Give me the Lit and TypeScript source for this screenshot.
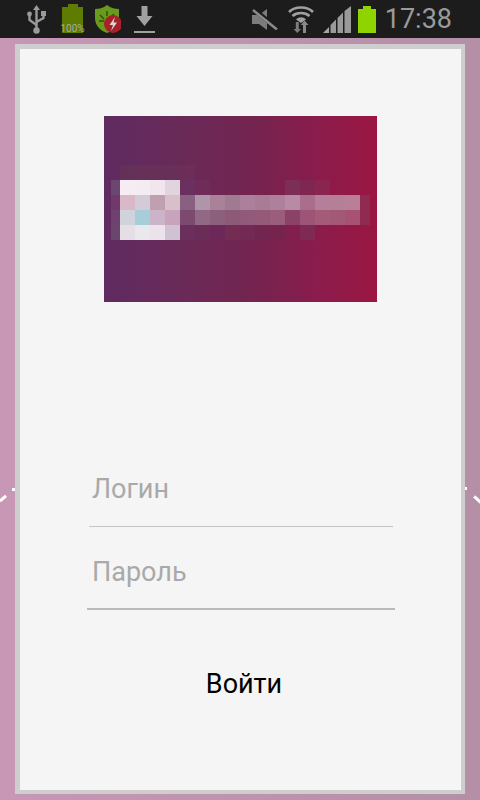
import { LitElement, html, css, svg } from "lit";
import { customElement } from "lit/decorators.js";

const T = "";
const ROWS: string[][] = [
  [T, "#633058", "#663059", "#663059", "#683059", "#6c2e58", T, T, T, T, T, T, T, T, T, T, T, T],
  ["#6b4670", "#f6ecf3", "#f1edf1", "#f2e6ee", "#e0d5df", "#6a3060", "#6f2c58", T, T, T, T, T, "#7d2e58", "#7f2653", "#8a2550", T, T, T],
  ["#6f3a6b", "#d9b8c8", "#d5cbd8", "#c0a0b0", "#d8c0c8", "#8a6080", "#b094aa", "#a98299", "#a07a90", "#ac7f9a", "#a87c95", "#ae809c", "#b88aa6", "#aa6d8c", "#b57f9c", "#b57f98", "#b97f98", "#912a50"],
  ["#70406e", "#d0d2dc", "#a6ced9", "#ccb4c8", "#c8a4bc", "#7c4a6e", "#926887", "#8c5f7c", "#8c5a76", "#925a7a", "#955a78", "#9b5d7c", "#8a4366", "#9c5577", "#a45b78", "#a35876", "#a85272", "#8f2a50"],
  ["#6a456c", "#e5dee6", "#e9e8ed", "#ece2ea", "#cfc2d2", "#6a2f5c", "#6c2c58", "#6c2858", "#742c54", "#722a54", "#70264f", "#762350", T, "#7e2a55", T, T, T, T],
];

const usb = svg`<svg class="i" width="19" height="29" viewBox="0 0 19 29"><g fill="none" stroke="#9a9a9a" stroke-width="2.4"><path d="M9.5 4V25"/><path d="M2.5 10V15L9.5 20"/><path d="M16.5 9V13L9.5 17"/></g><path d="M9.5 0L13 5H6Z" fill="#9a9a9a"/><circle cx="9.5" cy="25.5" r="3.2" fill="#9a9a9a"/><circle cx="2.5" cy="9" r="2.4" fill="#9a9a9a"/><rect x="14" y="6" width="5" height="5" fill="#9a9a9a"/></svg>`;
const shield = svg`<svg class="i" width="26" height="28" viewBox="0 0 26 28"><path d="M12 0C8 3 4 4 0 4V13C0 21 6 26 12 28C18 26 24 21 24 13V4C20 4 16 3 12 0Z" fill="#6a9a1c"/><path d="M12 6L12 11M5 10L9 14M19 9L15 13M4 16H9" stroke="#2f4f10" stroke-width="1.5"/><circle cx="18" cy="19" r="9" fill="#a8202a"/><path d="M20 12L14.5 20H18L16 26L22 17.5H18.5Z" fill="#d8d8d8"/></svg>`;
const download = svg`<svg class="i" width="21" height="27" viewBox="0 0 21 27"><path d="M7.5 0H13.5V10H18.5L10.5 20L2.5 10H7.5Z" fill="#a0a0a0"/><rect y="25" width="21" height="2" fill="#a0a0a0"/></svg>`;
const mute = svg`<svg class="i" width="26" height="21" viewBox="0 0 26 21"><path d="M0 6H7L15 0V21L7 15H0Z" fill="#7c7c7c"/><path d="M0 -1L26 20" stroke="#1c1c1c" stroke-width="4.6"/><path d="M1 1L25 20.5" stroke="#8a8a8a" stroke-width="2.6"/></svg>`;
const wifi = svg`<svg class="i" width="26" height="27" viewBox="0 0 26 27"><g fill="none" stroke="#a0a0a0" stroke-width="2.6"><path d="M1 6C7 0 19 0 25 6"/><path d="M4.5 10C9 6 17 6 21.5 10"/></g><path d="M8 13.5C11 10.5 15 10.5 18 13.5L13 17Z" fill="#a0a0a0"/><path d="M7.8 16H10.8V23H13L9.3 27L5.6 23H7.8Z" fill="#7c7c7c"/><path d="M15 27H18V19H20.5L16.5 14.5L12.8 19H15Z" fill="#8a8a8a"/></svg>`;
const signal = svg`<svg class="i" width="28" height="27" viewBox="0 0 28 27"><path d="M0 27L6 21V27Z" fill="#a5a5a5"/><path d="M7.5 19L13 13.5V27H7.5Z" fill="#9a9a9a"/><path d="M14.5 12L20 6.5V27H14.5Z" fill="#9a9a9a"/><path d="M21.5 5L28 0V27H21.5Z" fill="#9a9a9a"/></svg>`;

@customElement("app-root")
export class AppRoot extends LitElement {
  static styles = css`
    :host { display: block; width: 480px; height: 800px; overflow: hidden; position: relative;
      font-family: Roboto, "Noto Sans", sans-serif; }
    .page { height: 800px; display: flex; flex-direction: column;
      background: linear-gradient(90deg, #c797b5, #b48fa6); }
    .bar { height: 38px; flex: none; background: #1c1c1c; display: flex; align-items: center;
      justify-content: space-between; padding: 0 28px 0 27px; }
    .group { display: flex; align-items: center; }
    .i { display: block; flex: none; }
    .gl1 { margin-left: 16px; } .gl2 { margin-left: 12px; } .gl3 { margin-left: 13px; }
    .gr1 { margin-left: 10px; } .gr2 { margin-left: 9px; } .gr3 { margin-left: 7px; }
    .bat { position: relative; flex: none; }
    .bat-a { width: 21px; height: 29px; margin-top: -1px; }
    .bat-a .cap { width: 10px; height: 3px; margin: 0 auto; background: #5e7d00; }
    .bat-a .body { height: 26px; background: #5e7d00; }
    .pct { position: absolute; left: -3px; right: -3px; bottom: -1px; text-align: center; font-size: 10px;
      line-height: 10px; color: #a8a8a8; }
    .bat-b { width: 18px; height: 27px; }
    .bat-b .cap { width: 8px; height: 3px; margin: 0 auto; background: #8fd400; }
    .bat-b .body { height: 24px; background: #8fd400; }
    .time { margin-left: 9px; font-size: 27px; line-height: 32px; color: #9a9a9a; }
    .main { flex: 1; min-height: 0; padding: 6px 15px; display: flex; }
    .card { flex: 1; background: #f5f5f5; border: solid #cecece; border-width: 5px 4px 4px 5px;
      padding-top: 67px; display: flex; flex-direction: column; align-items: center; }
    .logo { position: relative; width: 273px; height: 186px; flex: none;
      background: linear-gradient(90deg, #5f2b60, #6a2a58 30%, #74244f 55%, #8a1c4c 78%, #9b1642); }
    .mosaic { position: absolute; left: 7px; top: 49px; display: grid;
      grid-template-columns: 9px repeat(16, 15px) 10px; grid-auto-rows: 15px; }
    .form { width: 100%; margin-top: 171px; display: flex; flex-direction: column; }
    .field { font-size: 27px; line-height: 32px; color: #a9a9a9; }
    .f1 { margin: 0 68px 0 69px; padding: 0 0 21px 3px; border-bottom: 1px solid #c4c4c4; }
    .f2 { margin: 29px 66px 0 67px; padding: 0 0 20px 5px; border-bottom: 2px solid #bababa; }
    .login { align-self: center; margin: 58px 0 0 7px; font-size: 27px; line-height: 32px; color: #000; }
    .tick { position: absolute; background: #fff; }
    .t1 { left: -1px; top: 497px; width: 8px; height: 3px; transform: rotate(-40deg); }
    .t2 { left: 12px; top: 488px; width: 3px; height: 3px; }
    .t3 { left: 465px; top: 487px; width: 2px; height: 3px; }
    .t4 { left: 473px; top: 498px; width: 9px; height: 3px; transform: rotate(42deg); }
  `;

  render() {
    return html`
      <div class="page">
        <div class="bar">
          <div class="group">
            ${usb}
            <div class="bat bat-a gl1"><div class="cap"></div><div class="body"></div><div class="pct">100%</div></div>
            <div class="gl2">${shield}</div>
            <div class="gl3">${download}</div>
          </div>
          <div class="group">
            ${mute}
            <div class="gr1">${wifi}</div>
            <div class="gr2">${signal}</div>
            <div class="bat bat-b gr3"><div class="cap"></div><div class="body"></div></div>
            <div class="time">17:38</div>
          </div>
        </div>
        <div class="main">
          <div class="card">
            <div class="logo">
              <div class="mosaic">
                ${ROWS.flat().map((c) => html`<div style=${c ? `background:${c}` : ""}></div>`)}
              </div>
            </div>
            <div class="form">
              <div class="field f1">Логин</div>
              <div class="field f2">Пароль</div>
              <div class="login">Войти</div>
            </div>
          </div>
        </div>
      </div>
      <div class="tick t1"></div><div class="tick t2"></div><div class="tick t3"></div><div class="tick t4"></div>
    `;
  }
}
